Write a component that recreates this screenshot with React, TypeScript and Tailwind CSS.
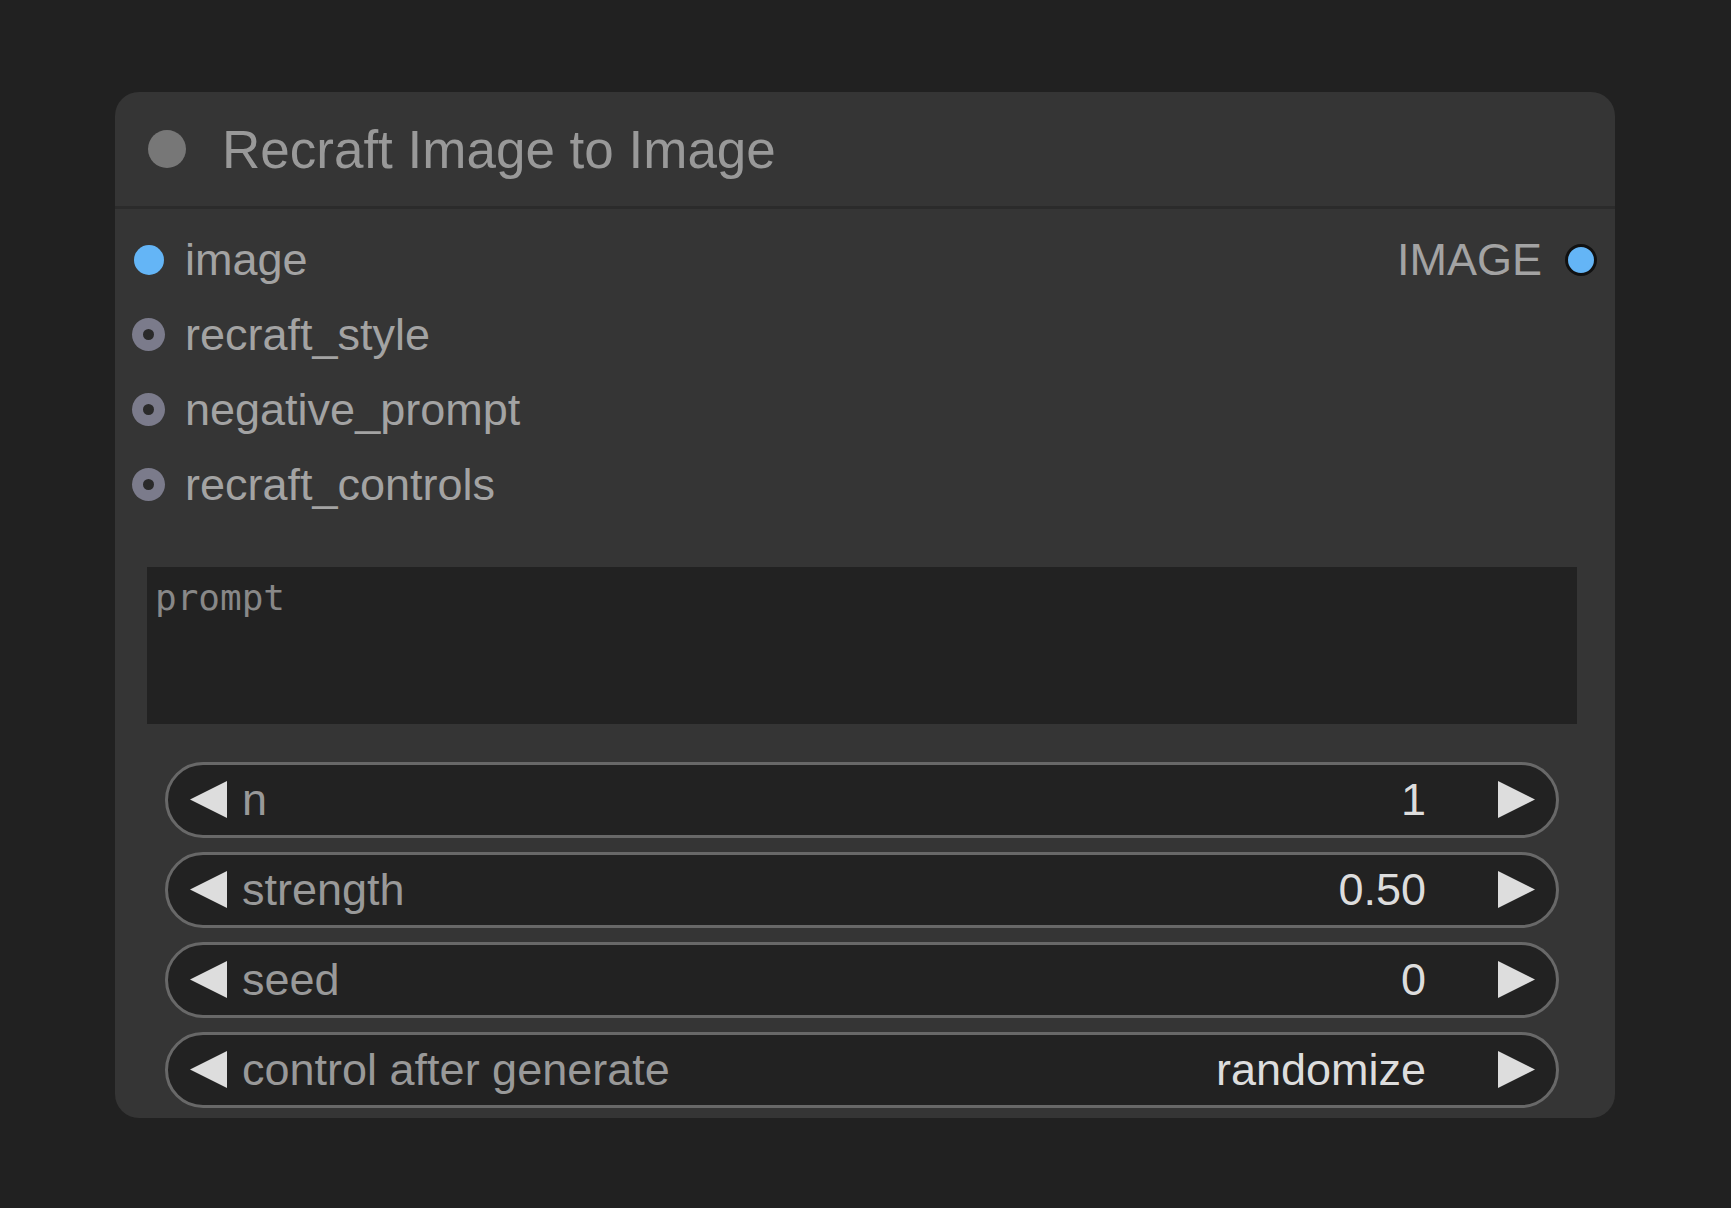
import React from "react";

type Slot = { name: string; color: string; hollow?: boolean };

const inputs: Slot[] = [
  { name: "image", color: "#64b5f6" },
  { name: "recraft_style", color: "#7b7b8b", hollow: true },
  { name: "negative_prompt", color: "#7b7b8b", hollow: true },
  { name: "recraft_controls", color: "#7b7b8b", hollow: true },
];

const widgets = [
  { label: "n", value: "1" },
  { label: "strength", value: "0.50" },
  { label: "seed", value: "0" },
  { label: "control after generate", value: "randomize" },
];

// small triangle used on both sides of a number widget
function Arrow({ dir }: { dir: "left" | "right" }) {
  return (
    <svg width="37" height="37" viewBox="0 0 37 37" className="shrink-0">
      {dir === "left" ? (
        <polygon points="37,0 37,37 0,18.5" fill="#dddddd" />
      ) : (
        <polygon points="0,0 0,37 37,18.5" fill="#dddddd" />
      )}
    </svg>
  );
}

function InputDot({ slot }: { slot: Slot }) {
  if (slot.hollow) {
    return (
      <div className="w-[33px] h-[33px] rounded-full bg-[#7b7b8b] flex items-center justify-center shrink-0">
        <div className="w-[11px] h-[11px] rounded-full bg-[#2a2a2a]" />
      </div>
    );
  }
  return (
    <div className="w-[33px] h-[33px] flex items-center justify-center shrink-0">
      <div className="w-[30px] h-[30px] rounded-full bg-[#64b5f6]" />
    </div>
  );
}

function Widget({ label, value }: { label: string; value: string }) {
  return (
    <div className="h-[76px] rounded-full border-[3px] border-[#686868] bg-[#222222] flex items-center pl-[22px] pr-[21px] pb-[2px]">
      <Arrow dir="left" />
      <span className="ml-[15px] text-[#999999] text-[45px] leading-none">{label}</span>
      <span className="ml-auto text-[#dddddd] text-[45px] leading-none">{value}</span>
      <div className="ml-[72px]">
        <Arrow dir="right" />
      </div>
    </div>
  );
}

export default function App() {
  return (
    <div
      className="h-[1208px] w-full bg-[#212121] pt-[92px] pl-[115px]"
      style={{ fontFamily: '"Liberation Sans", Arial, sans-serif' }}
    >
      <div className="w-[1500px] h-[1026px] rounded-[24px] bg-[#353535] flex flex-col overflow-hidden">
        {/* Title bar */}
        <div className="h-[114px] flex items-center pl-[33px] shrink-0">
          <div className="w-[38px] h-[38px] rounded-full bg-[#777777]" />
          <span className="ml-[36px] text-[53px] leading-none text-[#999999]">
            Recraft Image to Image
          </span>
        </div>
        <div className="h-[3px] bg-[#2b2b2b] shrink-0" />

        {/* Slots */}
        <div className="pt-[13px] flex flex-col">
          {inputs.map((slot, i) => (
            <div key={slot.name} className="h-[75px] flex items-center pl-[17px] pr-[18px]">
              <InputDot slot={slot} />
              <span className="ml-[20px] text-[45px] leading-none text-[#a3a3a3]">{slot.name}</span>
              {i === 0 && (
                <div className="ml-auto flex items-center">
                  <span className="text-[45px] leading-none text-[#a3a3a3]">IMAGE</span>
                  <div className="ml-[23px] w-[32px] h-[32px] rounded-full bg-[#64b5f6] border-[3px] border-[#111111]" />
                </div>
              )}
            </div>
          ))}
        </div>

        {/* Prompt */}
        <div className="mt-[45px] ml-[32px] mr-[38px] h-[157px] bg-[#222222] px-[8px] pt-[8px]">
          <span
            className="text-[36px] leading-[1.3] text-[#888888]"
            style={{ fontFamily: '"DejaVu Sans Mono", "Liberation Mono", monospace' }}
          >
            prompt
          </span>
        </div>

        {/* Widgets */}
        <div className="mt-[38px] ml-[50px] mr-[56px] flex flex-col gap-[14px]">
          {widgets.map((w) => (
            <Widget key={w.label} label={w.label} value={w.value} />
          ))}
        </div>
      </div>
    </div>
  );
}
